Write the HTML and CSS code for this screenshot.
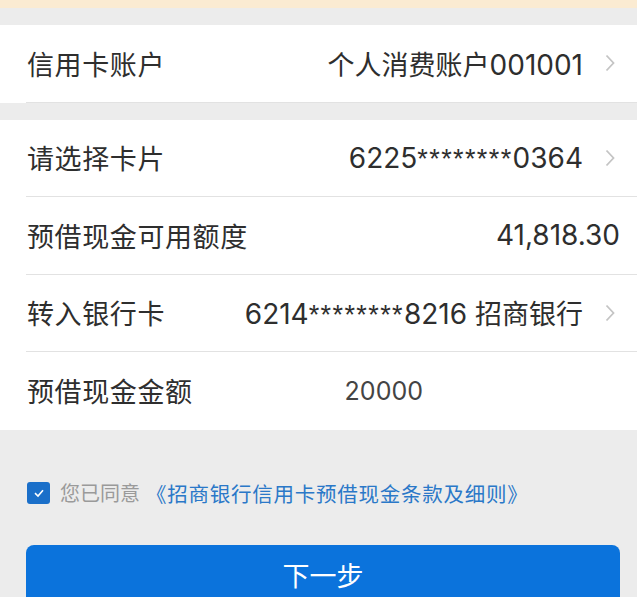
FILE: index.html
```html
<!DOCTYPE html>
<html lang="zh-CN">
<head>
    <meta charset="UTF-8">
    <meta name="viewport" content="width=device-width, initial-scale=1.0">
    <title>预借现金</title>
    <link rel="stylesheet" href="styles.css">
</head>
<body>
    <div class="notice-bar"></div>

    <div class="group">
        <div class="row">
            <span class="label">信用卡账户</span>
            <span class="value"><span class="cn">个人消费账户</span>001001</span>
            <span class="arrow"><svg width="10" height="18" viewBox="0 0 10 18"><path d="M1.5 1.5 L8.5 9 L1.5 16.5" fill="none" stroke="#c4c4c4" stroke-width="1.8"/></svg></span>
        </div>
    </div>

    <div class="group">
        <div class="row">
            <span class="label">请选择卡片</span>
            <span class="value">6225<span class="stars">********</span>0364</span>
            <span class="arrow"><svg width="10" height="18" viewBox="0 0 10 18"><path d="M1.5 1.5 L8.5 9 L1.5 16.5" fill="none" stroke="#c4c4c4" stroke-width="1.8"/></svg></span>
        </div>
        <div class="row">
            <span class="label">预借现金可用额度</span>
            <span class="value">41,818.30</span>
        </div>
        <div class="row">
            <span class="label">转入银行卡</span>
            <span class="value">6214<span class="stars">********</span>8216 <span class="cn">招商银行</span></span>
            <span class="arrow"><svg width="10" height="18" viewBox="0 0 10 18"><path d="M1.5 1.5 L8.5 9 L1.5 16.5" fill="none" stroke="#c4c4c4" stroke-width="1.8"/></svg></span>
        </div>
        <div class="row last">
            <span class="label">预借现金金额</span>
            <span class="amount">20000</span>
        </div>
    </div>

    <div class="agree">
        <span class="checkbox"><svg width="14" height="14" viewBox="0 0 14 14"><path d="M3 7.2 L6 10 L11 4.2" fill="none" stroke="#fff" stroke-width="1.6"/></svg></span>
        <span class="agree-text">您已同意</span>
        <a class="agree-link" href="#">《招商银行信用卡预借现金条款及细则》</a>
    </div>

    <div class="actions">
        <button class="next-btn">下一步</button>
    </div>
</body>
</html>
```

FILE: styles.css
```css
body {
    margin: 0;
    background-color: #ececec;
    font-family: "Noto Sans CJK SC", "Liberation Sans", sans-serif;
    color: #2e2e2e;
    overflow: hidden;
}
.notice-bar {
    height: 8px;
    background-color: #fbebd2;
}
.group {
    background-color: #fff;
    margin-top: 17px;
}
.row {
    display: flex;
    align-items: center;
    box-sizing: border-box;
    height: 77.5px;
    margin-left: 26px;
    padding-right: 17px;
    border-bottom: 1px solid #e2e2e2;
    font-size: 27px;
}
.group:first-of-type .row {
    height: 76px;
}
.group:first-of-type .row,
.row.last {
    border-bottom: none;
}
.label {
    flex: 0 0 auto;
    padding-left: 1px;
    letter-spacing: 0.6px;
}
.value {
    flex: 1;
    text-align: right;
    font-family: "Inter", "Noto Sans CJK SC", sans-serif;
    font-size: 28px;
    white-space: nowrap;
}
.value .cn {
    font-family: "Noto Sans CJK SC", sans-serif;
    font-size: 27px;
}
.value .stars {
    font-family: "Liberation Sans", sans-serif;
    font-size: 27px;
    letter-spacing: 1.4px;
}
.arrow {
    flex: 0 0 10px;
    margin: 0 5px 0 22px;
    display: flex;
    align-items: center;
}
.amount {
    margin-left: 152px;
    font-family: "Inter", sans-serif;
    font-size: 25px;
    color: #444;
}
.agree {
    display: flex;
    align-items: center;
    margin: 48px 0 0 27px;
    font-size: 20px;
}
.checkbox {
    width: 23px;
    height: 22px;
    border-radius: 3px;
    background-color: #1a6fc9;
    display: flex;
    align-items: center;
    justify-content: center;
    margin-right: 10px;
}
.agree-text {
    color: #9a9a9a;
    margin-right: 6px;
}
.agree-link {
    color: #2a78c8;
    font-size: 20.5px;
    letter-spacing: 0.75px;
    text-decoration: none;
}
.actions {
    padding: 37px 17px 0 26px;
}
.next-btn {
    width: 100%;
    height: 70px;
    border: none;
    border-radius: 8px;
    background-color: #0b73dc;
    color: #fff;
    font-family: "Noto Sans CJK SC", sans-serif;
    font-size: 27px;
    padding-bottom: 12px;
}
```
